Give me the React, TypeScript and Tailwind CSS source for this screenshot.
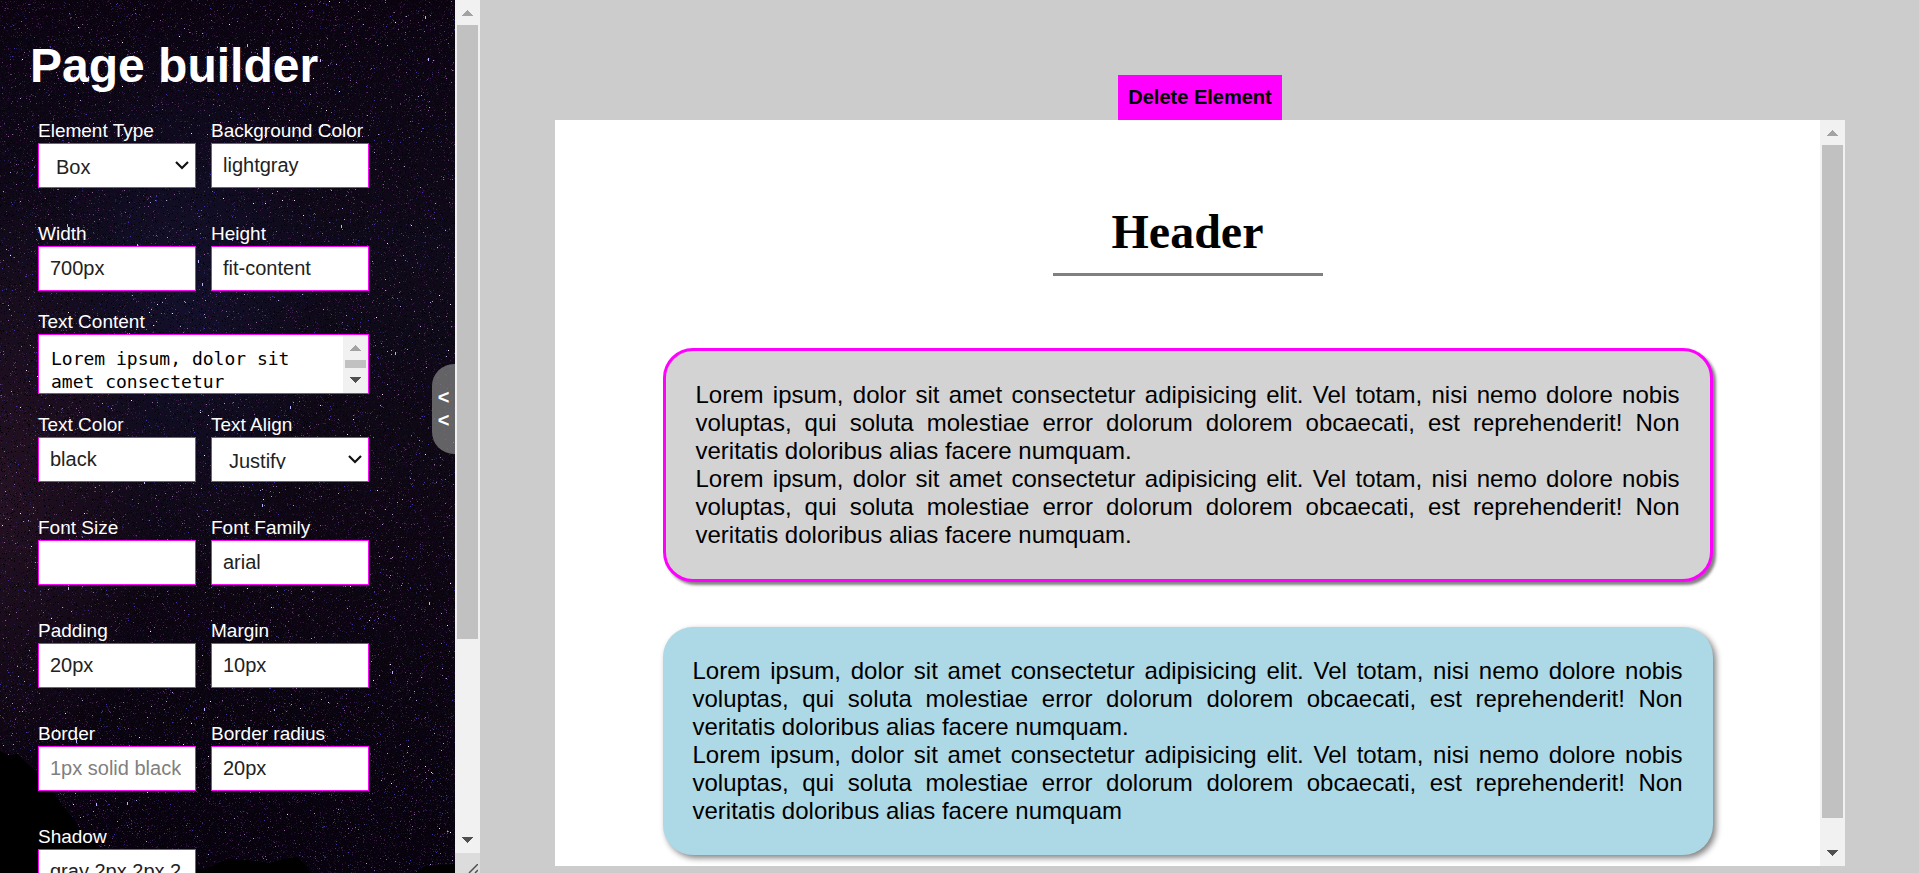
import type { ReactNode } from 'react';

function createRandom(seed: number) {
  let state = seed * 7919;
  return () => {
    state = (state + 0x6d2b79f5) | 0;
    let t = Math.imul(state ^ (state >>> 15), 1 | state);
    t = (t + Math.imul(t ^ (t >>> 7), 61 | t)) ^ t;
    return ((t ^ (t >>> 14)) >>> 0) / 4294967296;
  };
}

function scatter(seed: number, count: number, size = 1) {
  const random = createRandom(seed);
  let d = '';
  for (let i = 0; i < count; i++) {
    const x = Math.floor(random() * 455);
    const y = Math.floor(random() * 873);
    d += `M${x} ${y}h1v${size}h-1z`;
  }
  return d;
}

const STARS = [
  { color: '#1f0c28', d: scatter(11, 22000) },
  { color: '#100e22', d: scatter(12, 16000) },
  { color: '#040108', d: scatter(13, 20000) },
  { color: '#3a1b45', d: scatter(14, 7000) },
  { color: '#25225a', d: scatter(15, 4000) },
  { color: '#5c3e66', d: scatter(16, 2400) },
  { color: '#3f33a6', d: scatter(17, 900) },
  { color: '#93629f', d: scatter(18, 650) },
  { color: '#ab9edb', d: scatter(19, 300) },
  { color: '#f4e4f4', d: scatter(20, 130) },
  { color: '#bdb4ff', d: scatter(21, 40, 3) },
];

function NightSky() {
  return (
    <svg
      className="absolute inset-0 h-full w-full"
      viewBox="0 0 455 873"
      preserveAspectRatio="xMinYMin slice"
      shapeRendering="crispEdges"
      aria-hidden="true"
    >
      <defs>
        <linearGradient id="night" x1="0" y1="0" x2="0" y2="1">
          <stop offset="0" stopColor="#0b0310" />
          <stop offset="0.3" stopColor="#0f0a19" />
          <stop offset="0.6" stopColor="#0e0713" />
          <stop offset="1" stopColor="#07020d" />
        </linearGradient>
        <radialGradient id="blueGlow" cx="0.4" cy="0.34" r="0.32">
          <stop offset="0" stopColor="#15153a" stopOpacity="0.55" />
          <stop offset="1" stopColor="#15153a" stopOpacity="0" />
        </radialGradient>
        <radialGradient id="roseGlow" cx="0" cy="0.56" r="0.34">
          <stop offset="0" stopColor="#2b1426" stopOpacity="0.8" />
          <stop offset="1" stopColor="#2b1426" stopOpacity="0" />
        </radialGradient>
      </defs>
      <rect width="455" height="873" fill="url(#night)" />
      <rect width="455" height="873" fill="url(#blueGlow)" />
      <rect width="455" height="873" fill="url(#roseGlow)" />
      {STARS.map((layer) => (
        <path key={layer.color} d={layer.d} fill={layer.color} />
      ))}
      <path
        d="M0 751l8 4 10-1 9 10 9 7 8 14 10 8 8 12 5 6 8 9 7 13 12 8 5 8 12 5 15 2 18 9 30 1 30 4 12-6 11-5 30 2 12 2 14-4 14-2 9 8 5 8h103l12-7 32-2v27H0z"
        fill="#000"
      />
    </svg>
  );
}

function Arrow({ down = false }: { down?: boolean }) {
  return (
    <svg width="11" height="6" viewBox="0 0 11 6" shapeRendering="crispEdges" aria-hidden="true">
      <path
        d={down ? 'M0 0h11v1h-1v1h-1v1H8v1H7v1H6v1H5V5H4V4H3V3H2V2H1V1H0z' : 'M5 0h1v1h1v1h1v1h1v1h1v1h1v1H0V5h1V4h1V3h1V2h1V1h1z'}
        fill={down ? '#505050' : '#a3a3a3'}
      />
    </svg>
  );
}

function Scrollbar({ thumb }: { thumb: string }) {
  return (
    <div className="flex w-[25px] shrink-0 flex-col bg-[#f1f1f1]" aria-hidden="true">
      <div className="flex h-[25px] shrink-0 items-center justify-center pt-px">
        <Arrow />
      </div>
      <div className="min-h-0 flex-1 px-0.5">
        <div className={`bg-[#c1c1c1] ${thumb}`} />
      </div>
      <div className="flex h-[25px] shrink-0 items-center justify-center pb-px">
        <Arrow down />
      </div>
    </div>
  );
}

function Field({ id, label, children }: { id: string; label: string; children: ReactNode }) {
  return (
    <div className="flex min-w-0 flex-col">
      <label htmlFor={id} className="h-6 text-[19px] leading-6 whitespace-nowrap text-white">
        {label}
      </label>
      {children}
    </div>
  );
}

function TextField(props: { id: string; label: string; value?: string; placeholder?: string }) {
  return (
    <Field id={props.id} label={props.label}>
      <input
        id={props.id}
        type="text"
        defaultValue={props.value}
        placeholder={props.placeholder}
        className="h-[45px] w-full border border-[#f0f] bg-white pr-3.5 pl-[11px] text-xl text-[#222] outline-none placeholder:text-[#808080]"
      />
    </Field>
  );
}

function SelectField(props: { id: string; label: string; options: string[] }) {
  return (
    <Field id={props.id} label={props.label}>
      <div className="relative">
        <select
          id={props.id}
          className="block h-[45px] w-full appearance-none border border-[#f0f] bg-white px-[17px] pt-[11px] pb-3 text-xl leading-6 text-[#222] outline-none"
        >
          {props.options.map((option) => (
            <option key={option}>{option}</option>
          ))}
        </select>
        <svg
          className="pointer-events-none absolute top-[18px] right-[7px]"
          width="14"
          height="9"
          viewBox="0 0 14 9"
          fill="none"
          aria-hidden="true"
        >
          <path d="M1 1l6 6 6-6" stroke="#111" strokeWidth="2.2" />
        </svg>
      </div>
    </Field>
  );
}

function Row({ children }: { children: ReactNode }) {
  return <div className="grid grid-cols-2 gap-[15px]">{children}</div>;
}

const LOREM =
  'Lorem ipsum, dolor sit amet consectetur adipisicing elit. Vel totam, nisi nemo dolore nobis voluptas, qui soluta molestiae error dolorum dolorem obcaecati, est reprehenderit! Non veritatis doloribus alias facere numquam';

function Sidebar() {
  return (
    <aside className="flex h-full w-[480px] shrink-0">
      <div className="relative min-w-0 flex-1 overflow-hidden">
        <NightSky />
        <div className="relative pt-[38px] pr-[86px] pl-[38px]">
          <h1 className="-ml-2 text-5xl leading-[56px] font-bold whitespace-nowrap text-white">Page builder</h1>
          <form className="mt-[25px] flex flex-col gap-[34px]">
            <Row>
              <SelectField id="type" label="Element Type" options={['Box', 'Text', 'Image']} />
              <TextField id="background" label="Background Color" value="lightgray" />
            </Row>
            <div className="flex flex-col gap-[19px]">
              <Row>
                <TextField id="width" label="Width" value="700px" />
                <TextField id="height" label="Height" value="fit-content" />
              </Row>
              <Field id="content" label="Text Content">
                <div className="flex h-[60px] border border-[#f0f] bg-white">
                  <textarea
                    id="content"
                    defaultValue={`${LOREM}.`}
                    className="min-w-0 flex-1 resize-none overflow-hidden px-3 pt-3 font-['DejaVu_Sans_Mono',monospace] text-lg leading-[23px] text-black outline-none"
                  />
                  <Scrollbar thumb="h-2" />
                </div>
              </Field>
              <Row>
                <TextField id="color" label="Text Color" value="black" />
                <SelectField id="align" label="Text Align" options={['Justify', 'Left', 'Center', 'Right']} />
              </Row>
            </div>
            <Row>
              <TextField id="font-size" label="Font Size" />
              <TextField id="font-family" label="Font Family" value="arial" />
            </Row>
            <Row>
              <TextField id="padding" label="Padding" value="20px" />
              <TextField id="margin" label="Margin" value="10px" />
            </Row>
            <Row>
              <TextField id="border" label="Border" placeholder="1px solid black" />
              <TextField id="radius" label="Border radius" value="20px" />
            </Row>
            <Row>
              <TextField id="shadow" label="Shadow" value="gray 2px 2px 2px" />
            </Row>
          </form>
        </div>
        <button
          type="button"
          aria-label="Collapse panel"
          className="absolute top-[364px] right-0 flex h-[90px] w-[23px] flex-col items-center justify-center rounded-l-[22px] bg-[#808080]/75 text-xl leading-[23px] font-bold text-white"
        >
          <span>&lt;</span>
          <span>&lt;</span>
        </button>
      </div>
      <div className="flex flex-col bg-[#dcdcdc]">
        <div className="flex min-h-0 flex-1">
          <Scrollbar thumb="h-[76.5%]" />
        </div>
        <div className="flex h-5 items-end justify-end pr-0.5">
          <svg width="10" height="9" viewBox="0 0 10 9" fill="none" stroke="#505050" aria-hidden="true">
            <path d="M1 9l9-9M7 9l3-3" strokeWidth="1.5" />
          </svg>
        </div>
      </div>
    </aside>
  );
}

function Workspace() {
  return (
    <main className="flex min-w-0 flex-1 flex-col items-center bg-[#ccc] pt-[75px] pr-[74px] pb-[7px] pl-[75px]">
      <button type="button" className="h-[45px] shrink-0 bg-[#f0f] px-[10px] pb-0.5 text-xl font-bold text-black">
        Delete Element
      </button>
      <div className="flex min-h-0 w-full flex-1 bg-white">
        <div className="flex min-w-0 flex-1 flex-col items-center overflow-hidden pt-[84px]">
          <h2 className="w-[270px] border-b-[3px] border-[#808080] pb-[14px] text-center font-['Liberation_Serif',serif] text-5xl leading-[55px] font-bold text-black">
            Header
          </h2>
          <p className="mt-[72px] w-full max-w-[1050px] rounded-[30px] border-[3px] border-[#f0f] bg-[#d3d3d3] p-[30px] text-justify text-2xl leading-7 whitespace-pre-line text-black shadow-[3px_3px_3px_gray]">
            {`${LOREM}.\n${LOREM}.`}
          </p>
          <p className="mt-[45px] w-full max-w-[1050px] rounded-[30px] bg-[#add8e6] p-[30px] text-justify text-2xl leading-7 whitespace-pre-line text-black shadow-[3px_3px_6px_gray]">
            {`${LOREM}.\n${LOREM}`}
          </p>
        </div>
        <Scrollbar thumb="h-[96.7%]" />
      </div>
    </main>
  );
}

export default function App() {
  return (
    <div className="flex h-screen overflow-hidden font-['Liberation_Sans',Arial,sans-serif]">
      <Sidebar />
      <Workspace />
    </div>
  );
}
